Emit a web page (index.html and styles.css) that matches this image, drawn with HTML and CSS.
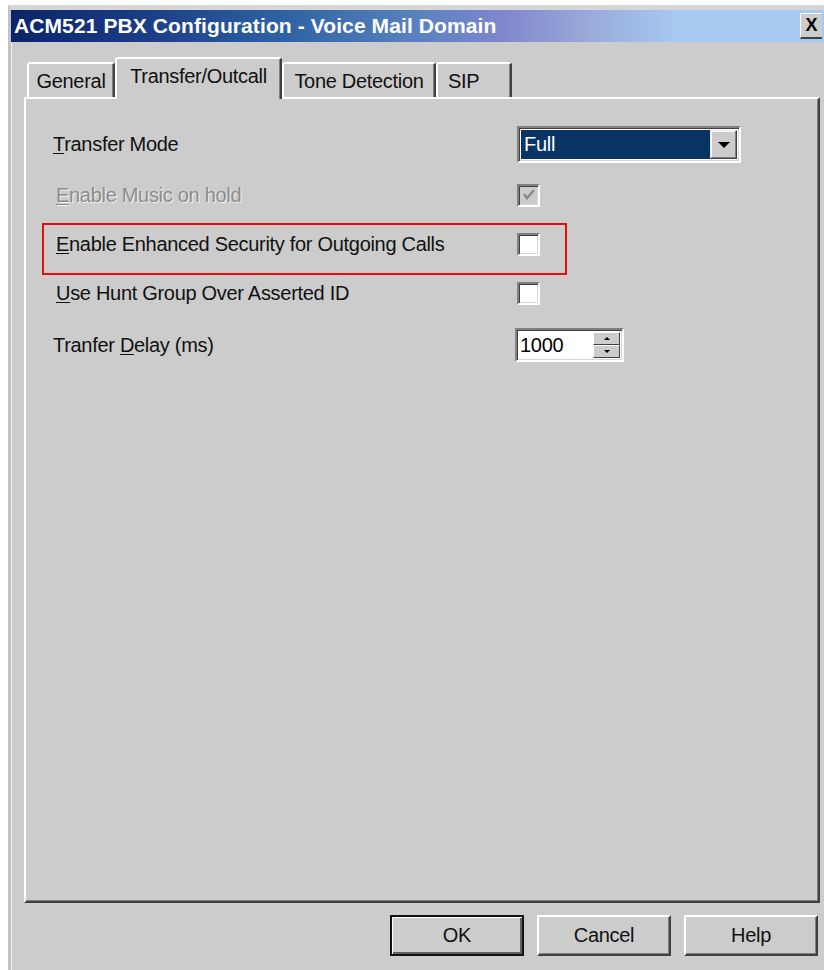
FILE: index.html
```html
<!DOCTYPE html>
<html lang="en">
<head>
<meta charset="utf-8">
<title>ACM521 PBX Configuration - Voice Mail Domain</title>
<link rel="stylesheet" href="styles.css">
</head>
<body>
<div class="window">
  <div class="titlebar">
    <span class="title">ACM521 PBX Configuration - Voice Mail Domain</span>
    <span class="close">X</span>
  </div>
  <div class="client">
    <div class="tabs">
      <div class="tab tab-general">General</div>
      <div class="tab tab-transfer active">Transfer/Outcall</div>
      <div class="tab tab-tone">Tone Detection</div>
      <div class="tab tab-sip">SIP</div>
    </div>
    <div class="panel">
      <div class="form">
        <div class="row r1">
          <span class="lbl"><u>T</u>ransfer Mode</span>
          <div class="combo">
            <span class="combo-value">Full</span>
            <span class="combo-btn"><span class="arrow-down"></span></span>
          </div>
        </div>
        <div class="row r2">
          <span class="lbl disabled"><u>E</u>nable Music on hold</span>
          <span class="check check-disabled">
            <svg width="14" height="14" viewBox="0 0 14 14"><polyline points="2,6 5,10 12,2" fill="none" stroke="#8a8a8a" stroke-width="2.4"/></svg>
          </span>
        </div>
        <div class="row r3">
          <span class="lbl lbl-in"><u>E</u>nable Enhanced Security for Outgoing Calls</span>
          <span class="check"></span>
        </div>
        <div class="row r4">
          <span class="lbl lbl-in"><u>U</u>se Hunt Group Over Asserted ID</span>
          <span class="check"></span>
        </div>
        <div class="row r5">
          <span class="lbl">Tranfer <u>D</u>elay (ms)</span>
          <div class="spin">
            <span class="spin-value">1000</span>
            <span class="spin-btns">
              <span class="spin-btn"><span class="arrow-up-sm"></span></span>
              <span class="spin-btn"><span class="arrow-down-sm"></span></span>
            </span>
          </div>
        </div>
      </div>
      <div class="highlight"></div>
    </div>
    <div class="buttons">
      <button class="btn btn-default">OK</button>
      <button class="btn">Cancel</button>
      <button class="btn">Help</button>
    </div>
  </div>
</div>
</body>
</html>
```
FILE: styles.css
```css
html, body {
  margin: 0;
  padding: 0;
  background: #ffffff;
  overflow: hidden;
}

body {
  width: 824px;
  height: 970px;
  font-family: "Liberation Sans", Arial, sans-serif;
  font-size: 20px;
  letter-spacing: -0.3px;
  color: #111;
}

/* dialog frame */
.window {
  margin: 5px 0 0 8px;
  width: 816px;
  height: 965px;
  box-sizing: border-box;
  background: #cccccc;
  border-top: 5px solid #d6d6d6;
  border-left: 3px solid #c2c2c2;
  box-shadow: inset 1px 1px 0 #f0f0f0;
}

/* caption bar */
.titlebar {
  height: 32px;
  display: flex;
  align-items: center;
  justify-content: space-between;
  background: linear-gradient(90deg, #0a246a 0%, #1b3c86 16%, #2f63a4 34%, #5a82c0 50%, #7d86cc 60%, #98a6d8 70%, #a6caf0 82%, #a6caf0 100%);
}

.title {
  padding-left: 3px;
  color: #ffffff;
  font-weight: bold;
  font-size: 21px;
  letter-spacing: 0.1px;
}

.close {
  width: 22px;
  height: 26px;
  margin-right: 2px;
  box-sizing: border-box;
  background: #cccccc;
  border-top: 1px solid #ffffff;
  border-left: 1px solid #ffffff;
  border-bottom: 2px solid #404040;
  display: flex;
  align-items: center;
  justify-content: center;
  color: #000;
  font-weight: bold;
  font-size: 18px;
  letter-spacing: 0;
}

.client {
  padding: 15px 0 0 13px;
}

/* tab strip */
.tabs {
  display: flex;
  align-items: flex-end;
  height: 42px;
  margin-bottom: -2px;
  padding-left: 3px;
  position: relative;
  z-index: 1;
}

.tab {
  height: 35px;
  margin-bottom: 2px;
  box-sizing: border-box;
  background: #cccccc;
  border-top: 2px solid #ffffff;
  border-left: 2px solid #ffffff;
  border-right: 2px solid #404040;
  border-radius: 3px 3px 0 0;
  box-shadow: inset -1px 0 0 #808080;
  display: flex;
  align-items: center;
  justify-content: center;
  padding-top: 2px;
}

.tab-general { width: 88px; }
.tab-transfer { width: 167px; }
.tab-tone { width: 154px; }
.tab-sip { width: 76px; justify-content: flex-start; padding-left: 10px; }

.tab.active {
  height: 42px;
  margin-bottom: 0;
  padding-top: 0;
  padding-bottom: 5px;
}

/* page of the property sheet */
.panel {
  position: relative;
  width: 796px;
  height: 806px;
  box-sizing: border-box;
  border-top: 2px solid #ffffff;
  border-left: 2px solid #ffffff;
  border-right: 2px solid #404040;
  border-bottom: 2px solid #404040;
  box-shadow: inset -1px -1px 0 #808080;
}

.form {
  padding: 20px 0 0 27px;
}

.row {
  display: grid;
  grid-template-columns: 464px auto;
  align-items: center;
}

.r1 { height: 51px; }
.r2 { height: 50px; }
.r3 { height: 48px; }
.r4 { height: 50px; }
.r5 { height: 54px; }

.lbl-in {
  padding-left: 3px;
}

.lbl u {
  text-decoration-thickness: 1px;
  text-underline-offset: 2px;
}

.lbl.disabled {
  color: #8c8c8c;
  text-shadow: 1px 1px 0 #f2f2f2;
  padding-left: 3px;
}

/* drop-down list */
.combo {
  width: 224px;
  height: 37px;
  box-sizing: border-box;
  display: flex;
  align-items: stretch;
  background: #ffffff;
  border-top: 2px solid #808080;
  border-left: 2px solid #808080;
  border-right: 2px solid #ffffff;
  border-bottom: 2px solid #ffffff;
  box-shadow: inset 1px 1px 0 #404040, inset -1px -1px 0 #d8d8d8;
  padding: 2px;
}

.combo-value {
  flex: 1;
  background: #0a3366;
  color: #ffffff;
  display: flex;
  align-items: center;
  padding-left: 3px;
}

.combo-btn {
  width: 27px;
  box-sizing: border-box;
  background: #cccccc;
  border-top: 1px solid #ececec;
  border-left: 1px solid #ececec;
  border-right: 1px solid #404040;
  border-bottom: 1px solid #404040;
  box-shadow: inset -1px -1px 0 #808080, inset 1px 1px 0 #ffffff;
  display: flex;
  align-items: center;
  justify-content: center;
}

.arrow-down {
  width: 0;
  height: 0;
  border-left: 6px solid transparent;
  border-right: 6px solid transparent;
  border-top: 6px solid #000;
}

/* check boxes */
.check {
  width: 23px;
  height: 23px;
  box-sizing: border-box;
  background: #ffffff;
  border-top: 2px solid #808080;
  border-left: 2px solid #808080;
  border-right: 2px solid #ffffff;
  border-bottom: 2px solid #ffffff;
  box-shadow: inset 1px 1px 0 #404040, inset -1px -1px 0 #d8d8d8;
  display: flex;
  align-items: center;
  justify-content: center;
}

.check-disabled {
  background: #cccccc;
}

/* numeric spinner */
.spin {
  width: 109px;
  height: 34px;
  margin-left: -2px;
  box-sizing: border-box;
  display: flex;
  align-items: stretch;
  background: #ffffff;
  border-top: 2px solid #808080;
  border-left: 2px solid #808080;
  border-right: 2px solid #ffffff;
  border-bottom: 2px solid #ffffff;
  box-shadow: inset 1px 1px 0 #404040, inset -1px -1px 0 #d8d8d8;
  padding: 2px;
}

.spin-value {
  flex: 1;
  display: flex;
  align-items: center;
  padding-left: 1px;
  color: #000;
}

.spin-btns {
  width: 27px;
  display: flex;
  flex-direction: column;
}

.spin-btn {
  flex: 1;
  box-sizing: border-box;
  background: #cccccc;
  border-top: 1px solid #ffffff;
  border-left: 1px solid #ffffff;
  border-right: 1px solid #404040;
  border-bottom: 1px solid #404040;
  display: flex;
  align-items: center;
  justify-content: center;
}

.arrow-up-sm {
  width: 0;
  height: 0;
  border-left: 3px solid transparent;
  border-right: 3px solid transparent;
  border-bottom: 3px solid #000;
}

.arrow-down-sm {
  width: 0;
  height: 0;
  border-left: 3px solid transparent;
  border-right: 3px solid transparent;
  border-top: 3px solid #000;
}

/* red call-out around the security option */
.highlight {
  position: absolute;
  left: 16px;
  top: 124px;
  width: 525px;
  height: 52px;
  box-sizing: border-box;
  border: 2px solid #e01010;
  pointer-events: none;
}

/* dialog buttons */
.buttons {
  width: 796px;
  margin-top: 12px;
  display: flex;
  justify-content: flex-end;
  gap: 13px;
}

.btn {
  width: 134px;
  height: 41px;
  margin: 0;
  padding: 0;
  box-sizing: border-box;
  font-family: "Liberation Sans", Arial, sans-serif;
  font-size: 20px;
  letter-spacing: -0.3px;
  color: #111;
  background: #cccccc;
  border-top: 2px solid #ffffff;
  border-left: 2px solid #ffffff;
  border-right: 2px solid #404040;
  border-bottom: 2px solid #404040;
  box-shadow: inset -1px -1px 0 #808080;
}

.buttons .btn:last-child {
  margin-right: 2px;
}

.btn-default {
  border: 2px solid #111111;
  box-shadow: inset 1px 1px 0 #ffffff, inset -2px -2px 0 #606060;
}
```
